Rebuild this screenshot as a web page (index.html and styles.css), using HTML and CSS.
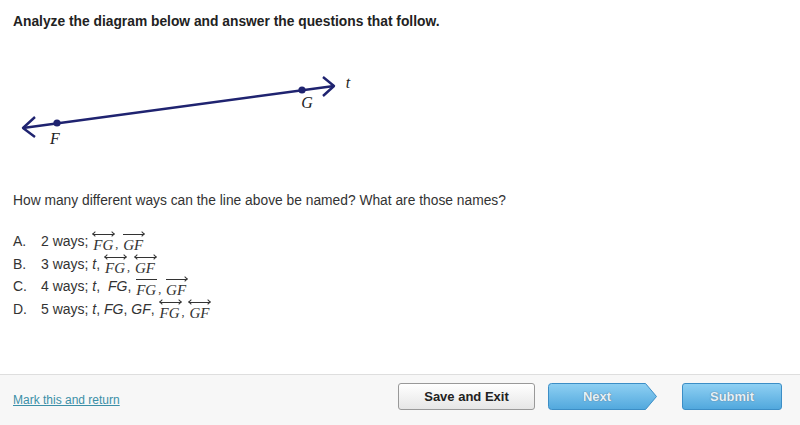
FILE: index.html
```html
<!DOCTYPE html>
<html lang="en">
<head>
<meta charset="UTF-8">
<title>Question</title>
<link rel="stylesheet" href="styles.css">
</head>
<body>
<div class="page">
    <div class="content">
        <h1 class="title">Analyze the diagram below and answer the questions that follow.</h1>

        <svg class="diagram" width="370" height="110" viewBox="0 45 370 110">
            <line x1="23" y1="128" x2="334" y2="86" stroke="#1f2370" stroke-width="2.4"/>
            <polyline points="35,117 23,128 35,137" fill="none" stroke="#1f2370" stroke-width="2.4" stroke-linejoin="round"/>
            <polyline points="323,77 334,86 323,96" fill="none" stroke="#1f2370" stroke-width="2.4" stroke-linejoin="round"/>
            <circle cx="57" cy="123" r="3.6" fill="#1f2370"/>
            <circle cx="302" cy="90" r="3.6" fill="#1f2370"/>
            <text x="55" y="144" class="lbl" text-anchor="middle">F</text>
            <text x="307" y="108" class="lbl" text-anchor="middle">G</text>
            <text x="348" y="88" class="lbl" text-anchor="middle">t</text>
        </svg>

        <p class="question">How many different ways can the line above be named? What are those names?</p>

        <div class="options">
            <div class="option"><span class="letter">A.</span>2 ways; <span class="seg line">FG</span><span class="cm">,</span> <span class="seg ray">GF</span></div>
            <div class="option"><span class="letter">B.</span>3 ways; <i>t</i>, <span class="seg line">FG</span><span class="cm">,</span> <span class="seg line">GF</span></div>
            <div class="option"><span class="letter">C.</span>4 ways; <i>t</i>,&nbsp; <i>FG</i>, <span class="seg bar">FG</span><span class="cm">,</span> <span class="seg ray">GF</span></div>
            <div class="option"><span class="letter">D.</span>5 ways; <i>t</i>, <i>FG</i>, <i>GF</i>, <span class="seg line">FG</span><span class="cm">,</span> <span class="seg line">GF</span></div>
        </div>
    </div>

    <div class="footer">
        <a href="#" class="mark">Mark this and return</a>
        <div class="actions">
            <button class="btn save">Save and Exit</button>
            <button class="btn next">
                <svg class="next-shape" width="110" height="27" viewBox="0 0 110 27">
                    <defs>
                        <linearGradient id="blue" x1="0" y1="0" x2="0" y2="1">
                            <stop offset="0" stop-color="#8fd0f3"/>
                            <stop offset="1" stop-color="#51a8dd"/>
                        </linearGradient>
                    </defs>
                    <path d="M3.5 0.5 H97.5 L108.5 13.5 L97.5 26.5 H3.5 Q0.5 26.5 0.5 23.5 V3.5 Q0.5 0.5 3.5 0.5 Z" fill="url(#blue)" stroke="#3c8ec6" stroke-width="1"/>
                </svg>
                <span class="next-text">Next</span>
            </button>
            <button class="btn submit">Submit</button>
        </div>
    </div>
</div>
</body>
</html>
```

FILE: styles.css
```css
body {
    margin: 0;
    font-family: "Liberation Sans", Arial, sans-serif;
    color: #333;
    background: #fff;
}

.page {
    display: flex;
    flex-direction: column;
    height: 425px;
}

.content {
    flex: 1;
    padding: 13px 13px 0 13px;
}

.title {
    margin: 0;
    font-size: 13.8px;
    line-height: 18px;
    font-weight: bold;
    color: #222;
}

.diagram {
    display: block;
    margin: 14px 0 0 -13px;
}

.lbl {
    font-family: "Liberation Serif", "Times New Roman", serif;
    font-style: italic;
    font-size: 16px;
    fill: #222;
}

.question {
    margin: 37px 0 0 0;
    font-size: 13.8px;
    line-height: 18px;
}

.options {
    margin-top: 20px;
}

.option {
    height: 22.5px;
    line-height: 22.5px;
    font-size: 14px;
    white-space: nowrap;
}

.letter {
    display: inline-block;
    width: 28px;
}

/* segment / ray / line notation: bar drawn as background, heads as pseudo elements */
.seg {
    display: inline-block;
    position: relative;
    font-family: "Liberation Serif", "Times New Roman", serif;
    font-style: italic;
    font-size: 15px;
    line-height: 15px;
    padding: 6px 2px 0 1px;
    vertical-align: -4px;
    background: linear-gradient(#333, #333) no-repeat;
    background-size: calc(100% - 2px) 1px;
    background-position: 1px 2px;
}

.seg.ray::after,
.seg.line::after,
.seg.line::before {
    content: "";
    position: absolute;
    top: 0;
    width: 3px;
    height: 3px;
    border-top: 1px solid #333;
}

.seg.ray::after,
.seg.line::after {
    right: 1px;
    border-right: 1px solid #333;
    transform: rotate(45deg);
}

.seg.line::before {
    left: 1px;
    border-left: 1px solid #333;
    transform: rotate(-45deg);
}

.cm {
    font-family: "Liberation Serif", "Times New Roman", serif;
    font-size: 12px;
    vertical-align: -2px;
}

.footer {
    height: 50px;
    border-top: 1px solid #dedede;
    background: #f7f7f7;
    display: flex;
    justify-content: space-between;
    align-items: flex-start;
    padding: 0 18px 0 13px;
}

.mark {
    margin-top: 18px;
    font-size: 12px;
    color: #3b8fa7;
    text-decoration: underline;
}

.actions {
    display: flex;
    margin-top: 8px;
}

.btn {
    height: 27px;
    font-family: "Liberation Sans", Arial, sans-serif;
    font-size: 13px;
    font-weight: bold;
    border-radius: 3px;
    padding: 0;
    cursor: pointer;
}

.save {
    width: 137px;
    color: #222;
    border: 1px solid #999;
    background: linear-gradient(#ffffff, #e6e6e6);
    margin-right: 13px;
}

.next {
    position: relative;
    width: 110px;
    border: none;
    background: none;
    margin-right: 24px;
}

.next-shape {
    position: absolute;
    left: 0;
    top: 0;
}

.next-text {
    position: relative;
    display: block;
    width: 98px;
    text-align: center;
}

.next-text,
.submit {
    color: #e4f1fa;
    text-shadow: 0 0 1px #5d7f96, 0 0 1px #5d7f96;
}

.submit {
    width: 100px;
    border: 1px solid #3c8ec6;
    background: linear-gradient(#8fd0f3, #51a8dd);
}
```
